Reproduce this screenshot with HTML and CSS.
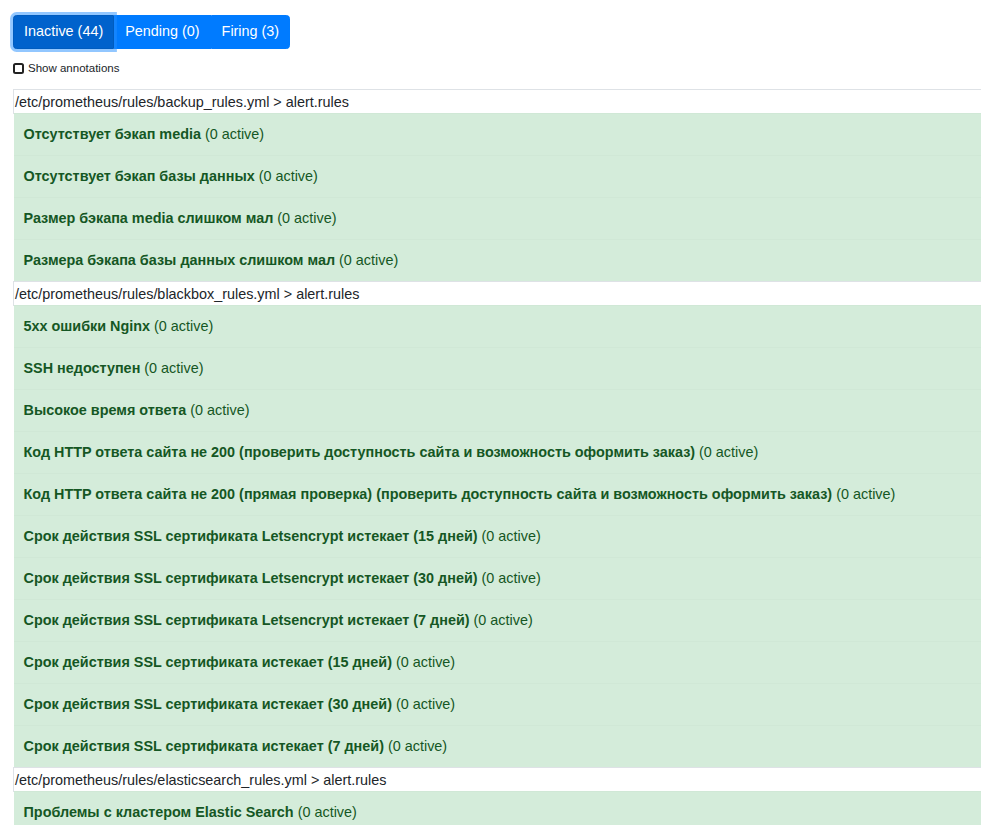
FILE: index.html
```html
<!DOCTYPE html>
<html>
<head>
<meta charset="utf-8">
<link rel="stylesheet" href="styles.css">
</head>
<body>
<div class="page">
  <div class="btn-group">
    <button class="btn active">Inactive (44)</button>
    <button class="btn">Pending (0)</button>
    <button class="btn last">Firing (3)</button>
  </div>
  <label class="annot"><span class="check"></span>Show annotations</label>
  <table class="rules">
    <tbody>
      <tr class="group"><td>/etc/prometheus/rules/backup_rules.yml &gt; alert.rules</td></tr>
      <tr class="rule"><td><b>Отсутствует бэкап media</b> (0 active)</td></tr>
      <tr class="rule"><td><b>Отсутствует бэкап базы данных</b> (0 active)</td></tr>
      <tr class="rule"><td><b>Размер бэкапа media слишком мал</b> (0 active)</td></tr>
      <tr class="rule"><td><b>Размера бэкапа базы данных слишком мал</b> (0 active)</td></tr>
    </tbody>
    <tbody>
      <tr class="group"><td>/etc/prometheus/rules/blackbox_rules.yml &gt; alert.rules</td></tr>
      <tr class="rule"><td><b>5xx ошибки Nginx</b> (0 active)</td></tr>
      <tr class="rule"><td><b>SSH недоступен</b> (0 active)</td></tr>
      <tr class="rule"><td><b>Высокое время ответа</b> (0 active)</td></tr>
      <tr class="rule"><td><b>Код HTTP ответа сайта не 200 (проверить доступность сайта и возможность оформить заказ)</b> (0 active)</td></tr>
      <tr class="rule"><td><b>Код HTTP ответа сайта не 200 (прямая проверка) (проверить доступность сайта и возможность оформить заказ)</b> (0 active)</td></tr>
      <tr class="rule"><td><b>Срок действия SSL сертификата Letsencrypt истекает (15 дней)</b> (0 active)</td></tr>
      <tr class="rule"><td><b>Срок действия SSL сертификата Letsencrypt истекает (30 дней)</b> (0 active)</td></tr>
      <tr class="rule"><td><b>Срок действия SSL сертификата Letsencrypt истекает (7 дней)</b> (0 active)</td></tr>
      <tr class="rule"><td><b>Срок действия SSL сертификата истекает (15 дней)</b> (0 active)</td></tr>
      <tr class="rule"><td><b>Срок действия SSL сертификата истекает (30 дней)</b> (0 active)</td></tr>
      <tr class="rule"><td><b>Срок действия SSL сертификата истекает (7 дней)</b> (0 active)</td></tr>
    </tbody>
    <tbody>
      <tr class="group"><td>/etc/prometheus/rules/elasticsearch_rules.yml &gt; alert.rules</td></tr>
      <tr class="rule"><td><b>Проблемы с кластером Elastic Search</b> (0 active)</td></tr>
    </tbody>
  </table>
</div>
</body>
</html>
```
FILE: styles.css
```css
html, body {
  margin: 0;
  padding: 0;
  overflow: hidden;
  background: #fff;
}
body {
  font-family: "Liberation Sans", Arial, sans-serif;
  font-size: 14.4px;
  line-height: 1.5;
  color: #212529;
}
.page {
  padding: 15px 0 0 13px;
}
.btn-group {
  display: flex;
}
.btn {
  font-family: inherit;
  font-size: 14.4px;
  line-height: 21.6px;
  padding: 5.4px 10px;
  border: 1px solid #007bff;
  background: #007bff;
  color: #fff;
  border-radius: 0;
  margin: 0;
  cursor: pointer;
}
.btn.active {
  background: #0062cc;
  border-color: #005cbf;
  border-radius: 3.6px 0 0 3.6px;
  box-shadow: 0 0 0 2.9px rgba(38, 143, 255, 0.5);
  position: relative;
  z-index: 1;
}
.btn.last {
  border-radius: 0 3.6px 3.6px 0;
}
.annot {
  display: flex;
  align-items: center;
  margin-top: 8px;
  font-size: 11.5px;
  line-height: 22px;
  color: #212529;
}
.check {
  width: 7px;
  height: 7px;
  border: 2px solid #222;
  border-radius: 2.5px;
  margin-right: 4px;
}
.rules {
  border-collapse: collapse;
  width: 1000px;
  margin-top: 10px;
}
.rules td {
  padding: 0;
}
.group td {
  border-top: 1px solid #dee2e6;
  border-left: 1px solid #dee2e6;
  padding: 1px 2px 0 1px;
  line-height: 22px;
  background: #fff;
  color: #212529;
  font-size: 14.4px;
}
.rule td {
  background: #d4ecda;
  color: #155724;
  border-top: 1px solid #d0e8d6;
  padding: 10px;
  line-height: 21px;
  font-size: 14.4px;
}
.rule td b {
  font-weight: bold;
}
```
